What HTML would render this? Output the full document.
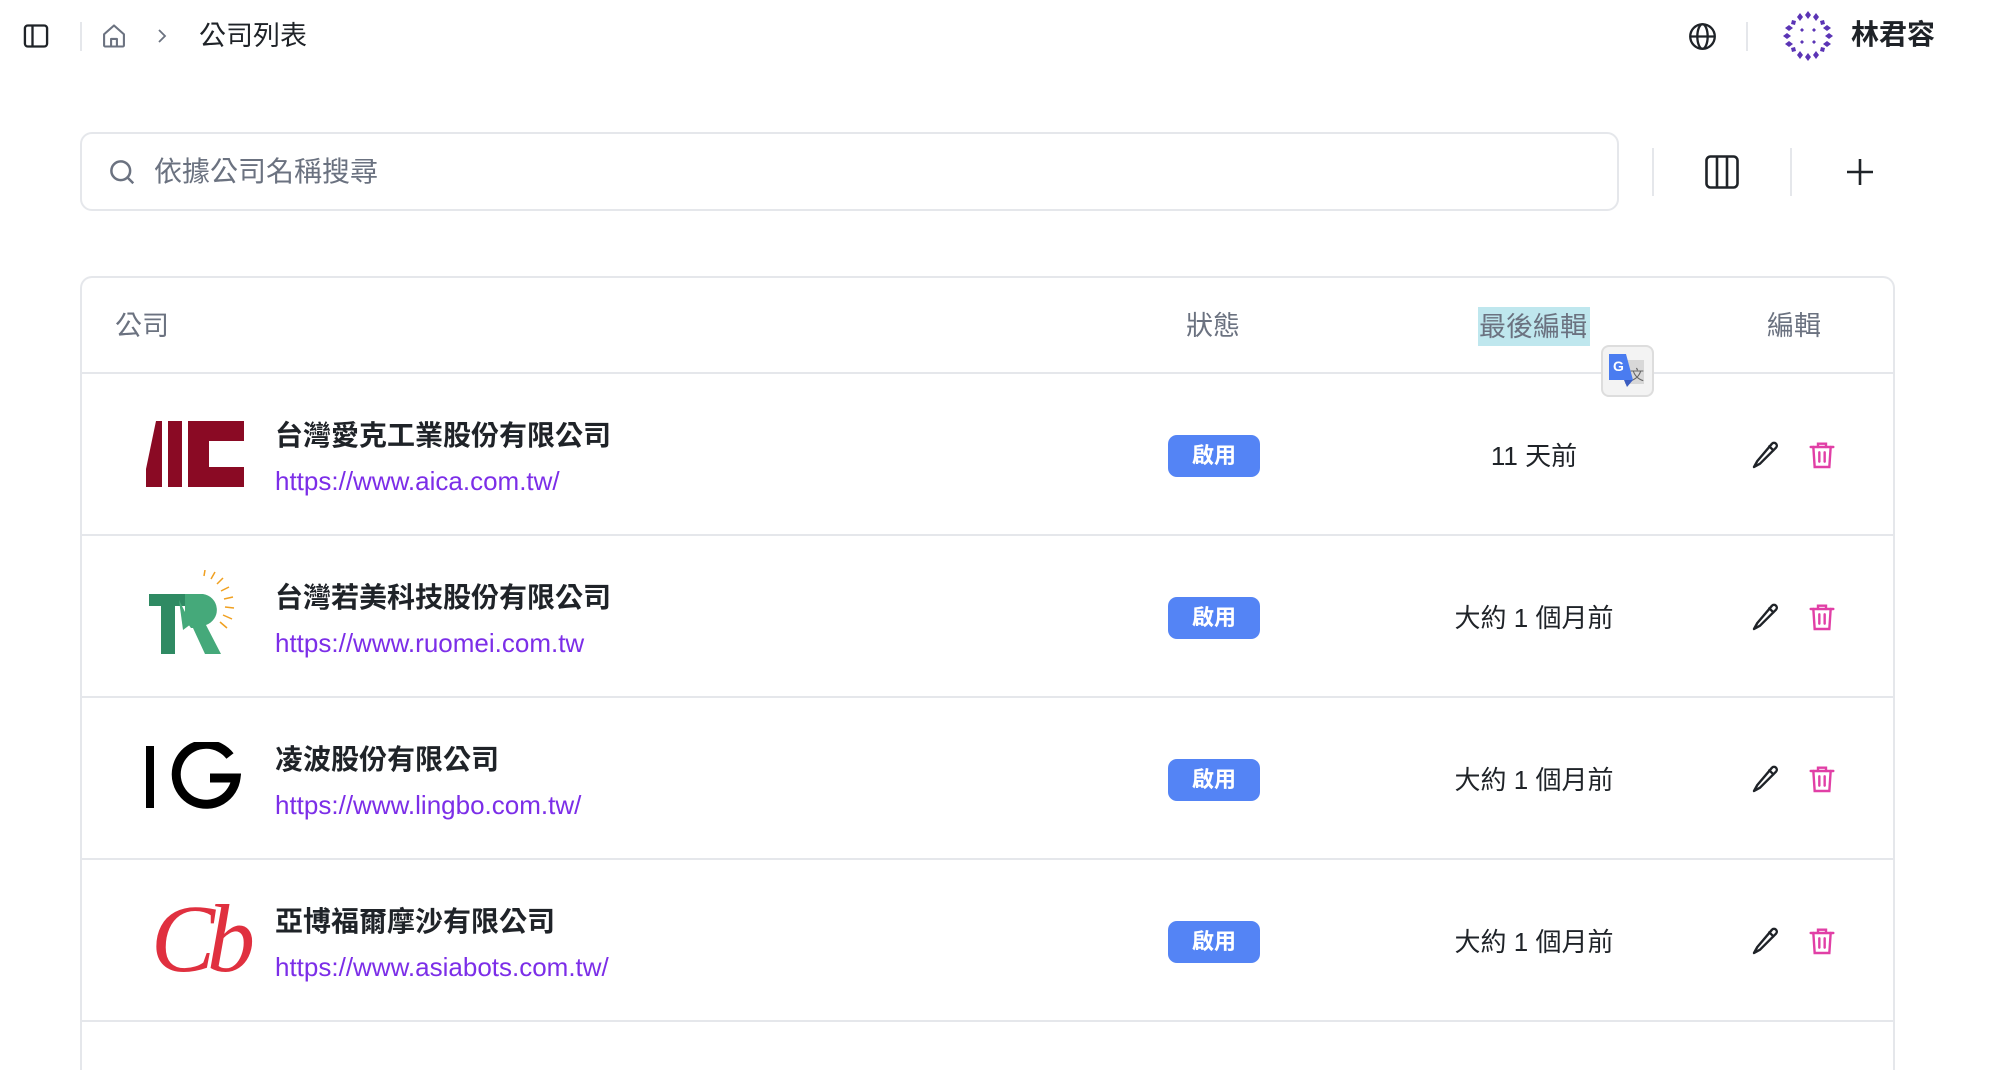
<!DOCTYPE html>
<html><head><meta charset="utf-8">
<style>
*{margin:0;padding:0;box-sizing:border-box}
html,body{width:1998px;height:1070px;overflow:hidden}
body{background:#fff;position:relative;font-family:"Liberation Sans","Noto Sans CJK TC",sans-serif;color:#1f2328}
.a{position:absolute}
.sep{position:absolute;width:2px;background:#e5e7eb}
.hd{position:absolute;top:308px;font-size:27px;color:#6b7280;line-height:36px}
.row{position:absolute;left:81px;width:1812px;height:162px;border-bottom:2px solid #e5e7eb}
.name{position:absolute;left:194px;font-size:28px;font-weight:bold;color:#1f2328;line-height:36px}
.url{position:absolute;left:194px;font-size:26px;color:#7c2ee8;line-height:32px}
.badge{position:absolute;left:1087px;width:92px;height:42px;background:#5484f5;border-radius:9px;color:#fff;font-size:22px;font-weight:bold;text-align:center;line-height:42px}
.time{position:absolute;left:1353px;width:200px;text-align:center;font-size:26px;color:#1f2328;line-height:36px}
.ic{position:absolute}
</style></head><body>

<svg class="a" style="left:22px;top:22px" width="28" height="28" viewBox="0 0 24 24" fill="none" stroke="#1f2328" stroke-width="2"><rect x="2.5" y="3" width="19" height="18" rx="2.5"/><line x1="9" y1="3" x2="9" y2="21"/></svg>
<div class="sep" style="left:80px;top:22px;height:29px"></div>
<svg class="a" style="left:100px;top:21px" width="28" height="30" viewBox="0 0 24 24" fill="none" stroke="#6b7280" stroke-width="1.8" stroke-linejoin="round"><path d="M3.5 10.5L12 3l8.5 7.5V20a1 1 0 0 1-1 1h-15a1 1 0 0 1-1-1z"/><path d="M9.5 21v-6.5h5V21"/></svg>
<svg class="a" style="left:155px;top:27px" width="14" height="18" viewBox="0 0 14 18" fill="none" stroke="#6b7280" stroke-width="1.8"><path d="M4 3l6 6-6 6"/></svg>
<div class="a" style="left:199px;top:18px;font-size:27px;line-height:36px;color:#1f2328">公司列表</div>

<svg class="a" style="left:1687px;top:21px" width="31" height="31" viewBox="0 0 24 24" fill="none" stroke="#1f2328" stroke-width="1.8"><circle cx="12" cy="12" r="9.5"/><ellipse cx="12" cy="12" rx="4" ry="9.5"/><line x1="2.5" y1="12" x2="21.5" y2="12"/></svg>
<div class="sep" style="left:1746px;top:22px;height:29px"></div>
<svg class="a" style="left:1780px;top:8px" width="56" height="56" viewBox="0 0 56 56" fill="#5b34b5">
<g><path d="M28 3l3 4-3 4-3-4z"/><path d="M20 5l3 4-3 4-3-4z"/><path d="M36 5l3 4-3 4-3-4z"/><path d="M28 45l3 4-3 4-3-4z"/><path d="M20 43l3 4-3 4-3-4z"/><path d="M36 43l3 4-3 4-3-4z"/><path d="M3 28l4-3 4 3-4 3z"/><path d="M5 20l4-3 4 3-4 3z"/><path d="M5 36l4-3 4 3-4 3z"/><path d="M45 28l4-3 4 3-4 3z"/><path d="M43 20l4-3 4 3-4 3z"/><path d="M43 36l4-3 4 3-4 3z"/><path d="M12 12l4 1-1 4-4-1z"/><path d="M44 12l-4 1 1 4 4-1z"/><path d="M12 44l4-1-1-4-4 1z"/><path d="M44 44l-4-1 1-4 4 1z"/><path d="M22 20l2 2-2 2-2-2z"/><path d="M34 20l2 2-2 2-2-2z"/><path d="M22 32l2 2-2 2-2-2z"/><path d="M34 32l2 2-2 2-2-2z"/></g></svg>
<div class="a" style="left:1851px;top:17px;font-size:28px;font-weight:bold;line-height:36px;color:#1f2328">林君容</div>

<div class="a" style="left:80px;top:132px;width:1539px;height:79px;border:2px solid #e5e7eb;border-radius:12px"></div>
<svg class="a" style="left:107px;top:157px" width="30" height="30" viewBox="0 0 24 24" fill="none" stroke="#6b7280" stroke-width="2"><circle cx="11" cy="11" r="7.5"/><line x1="16.5" y1="16.5" x2="21" y2="21"/></svg>
<div class="a" style="left:154px;top:154px;font-size:28px;line-height:36px;color:#6b7280">依據公司名稱搜尋</div>
<div class="sep" style="left:1652px;top:148px;height:48px"></div>
<svg class="a" style="left:1704px;top:154px" width="36" height="36" viewBox="0 0 36 36" fill="none" stroke="#1f2328" stroke-width="2.6"><rect x="2.5" y="2.5" width="31" height="31" rx="4"/><line x1="13" y1="2.5" x2="13" y2="33.5"/><line x1="23" y1="2.5" x2="23" y2="33.5"/></svg>
<div class="sep" style="left:1790px;top:148px;height:48px"></div>
<svg class="a" style="left:1845px;top:157px" width="30" height="30" viewBox="0 0 30 30" stroke="#1f2328" stroke-width="2.6"><line x1="15" y1="2" x2="15" y2="28"/><line x1="2" y1="15" x2="28" y2="15"/></svg>

<div class="a" style="left:80px;top:276px;width:1815px;height:794px;border:2px solid #e5e7eb;border-bottom:none;border-radius:12px 12px 0 0"></div>
<div class="a" style="left:81px;top:372px;width:1812px;height:2px;background:#e5e7eb"></div>
<div class="hd" style="left:115px">公司</div>
<div class="hd" style="left:1186px">狀態</div>
<div class="a" style="left:1478px;top:307px;width:112px;height:39px;background:#bfe7ee"></div>
<div class="hd" style="left:1479px;top:309px">最後編輯</div>
<div class="hd" style="left:1767px">編輯</div>

<div class="row" style="top:374px">
  <svg class="a" style="left:65px;top:47px" width="98" height="66" viewBox="0 0 98 66" fill="#8a0a24"><path d="M0 48L10 0h6v66H0z"/><rect x="22" y="0" width="14" height="66"/><path d="M42 0h56v20H63v26h35v20H42z"/></svg>
  <div class="name" style="top:44px">台灣愛克工業股份有限公司</div>
  <div class="url" style="top:91px">https://www.aica.com.tw/</div>
  <div class="badge" style="top:61px">啟用</div>
  <div class="time" style="top:64px">11 天前</div>
</div>
<div class="row" style="top:536px">
  <svg class="a" style="left:68px;top:34px" width="90" height="90" viewBox="0 0 90 90"><g stroke="#f0a020" stroke-width="1.5"><line x1="55" y1="6" x2="56" y2="0"/><line x1="62" y1="9" x2="66" y2="2"/><line x1="68" y1="14" x2="74" y2="8"/><line x1="72" y1="21" x2="80" y2="17"/><line x1="75" y1="29" x2="84" y2="27"/><line x1="76" y1="37" x2="85" y2="38"/><line x1="74" y1="45" x2="83" y2="49"/><line x1="71" y1="52" x2="78" y2="58"/></g><path d="M0 24h40v12H26v48H12V36H0z" fill="#2f8a63"/><path d="M36 24h18a16 16 0 0 1 3 31l15 29H56L44 58h-2l-6-8z" fill="#45a97a"/><path d="M30 30l12 24-8 6z" fill="#45a97a"/></svg>
  <div class="name" style="top:44px">台灣若美科技股份有限公司</div>
  <div class="url" style="top:91px">https://www.ruomei.com.tw</div>
  <div class="badge" style="top:61px">啟用</div>
  <div class="time" style="top:64px">大約 1 個月前</div>
</div>
<div class="row" style="top:698px">
  <svg class="a" style="left:65px;top:44px" width="95" height="70" viewBox="0 0 95 70"><rect x="0" y="4" width="8" height="62" fill="#000"/><path d="M84 14A30 30 0 1 0 90 36H64" fill="none" stroke="#000" stroke-width="9"/></svg>
  <div class="name" style="top:44px">凌波股份有限公司</div>
  <div class="url" style="top:91px">https://www.lingbo.com.tw/</div>
  <div class="badge" style="top:61px">啟用</div>
  <div class="time" style="top:64px">大約 1 個月前</div>
</div>
<div class="row" style="top:860px">
  <div class="a" style="left:70px;top:24px;font-family:'Liberation Serif',serif;font-style:italic;font-size:96px;line-height:110px;color:#e0303f;letter-spacing:-8px">Cb</div>
  <div class="name" style="top:44px">亞博福爾摩沙有限公司</div>
  <div class="url" style="top:91px">https://www.asiabots.com.tw/</div>
  <div class="badge" style="top:61px">啟用</div>
  <div class="time" style="top:64px">大約 1 個月前</div>
</div>

<svg width="0" height="0" style="position:absolute"><defs>
<g id="pen" fill="none" stroke="#1f2328" stroke-width="1.8" stroke-linejoin="round" stroke-linecap="round"><path d="M16.5 3.5a2.1 2.1 0 0 1 3 3L7.5 18.5 3 21l2.5-4.5z"/><line x1="14.5" y1="5.5" x2="17.5" y2="8.5"/></g>
<g id="bin" fill="none" stroke="#e13fa6" stroke-width="1.8" stroke-linecap="round"><line x1="3.5" y1="6" x2="20.5" y2="6"/><path d="M9 6V3.5h6V6"/><path d="M5.5 6l1 15h11l1-15"/><line x1="10" y1="10" x2="10" y2="17"/><line x1="14" y1="10" x2="14" y2="17"/></g>
</defs></svg>
<svg class="ic" style="left:1750px;top:439px" width="32" height="32" viewBox="0 0 24 24"><use href="#pen"/></svg>
<svg class="ic" style="left:1806px;top:439px" width="32" height="32" viewBox="0 0 24 24"><use href="#bin"/></svg>
<svg class="ic" style="left:1750px;top:601px" width="32" height="32" viewBox="0 0 24 24"><use href="#pen"/></svg>
<svg class="ic" style="left:1806px;top:601px" width="32" height="32" viewBox="0 0 24 24"><use href="#bin"/></svg>
<svg class="ic" style="left:1750px;top:763px" width="32" height="32" viewBox="0 0 24 24"><use href="#pen"/></svg>
<svg class="ic" style="left:1806px;top:763px" width="32" height="32" viewBox="0 0 24 24"><use href="#bin"/></svg>
<svg class="ic" style="left:1750px;top:925px" width="32" height="32" viewBox="0 0 24 24"><use href="#pen"/></svg>
<svg class="ic" style="left:1806px;top:925px" width="32" height="32" viewBox="0 0 24 24"><use href="#bin"/></svg>

<div class="a" style="left:1601px;top:345px;width:53px;height:52px;background:#f3f3f3;border:2px solid #ddd;border-radius:8px"></div>
<svg class="a" style="left:1608px;top:352px" width="40" height="40" viewBox="0 0 40 40"><rect x="17" y="8" width="19" height="24" fill="#d8d8d8"/><text x="22" y="28" font-size="14" fill="#666" font-family="Noto Sans CJK TC,sans-serif">文</text><path d="M1 2h17l7 26H1z" fill="#4a7cf0"/><path d="M16 28h9l-6 7z" fill="#3a5cc0"/><text x="5" y="19" font-size="14" font-weight="bold" fill="#fff" font-family="Liberation Sans,sans-serif">G</text></svg>
</body></html>
